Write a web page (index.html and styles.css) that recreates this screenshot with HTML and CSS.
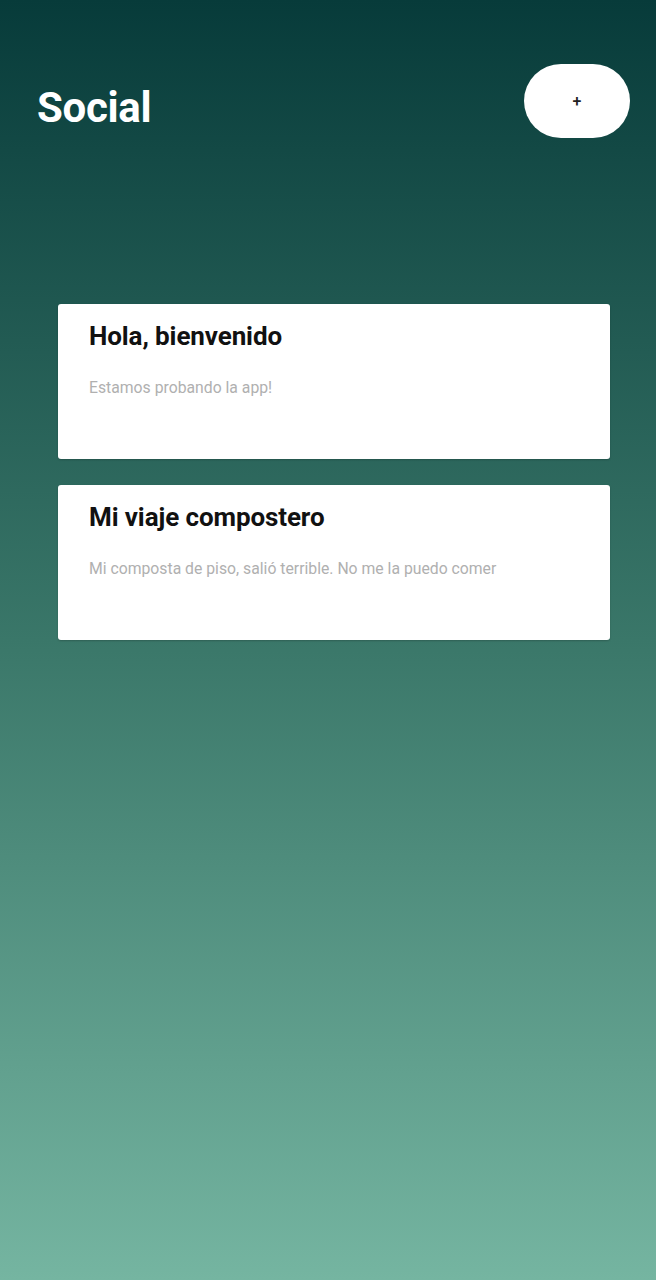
FILE: index.html
```html
<!DOCTYPE html>
<html lang="es">
<head>
<meta charset="utf-8">
<link rel="stylesheet" href="styles.css">
</head>
<body>
<div class="screen">
  <header class="header">
    <h1 class="title">Social</h1>
    <button class="add-btn">+</button>
  </header>
  <main class="list">
    <article class="card">
      <h2 class="card-title">Hola, bienvenido</h2>
      <p class="card-text">Estamos probando la app!</p>
    </article>
    <article class="card">
      <h2 class="card-title">Mi viaje compostero</h2>
      <p class="card-text">Mi composta de piso, salió terrible. No me la puedo comer</p>
    </article>
  </main>
</div>
</body>
</html>
```
FILE: styles.css
```css
* { box-sizing: border-box; }
html, body { margin: 0; padding: 0; }
body {
  font-family: Roboto, "Noto Sans", sans-serif;
}
.screen {
  width: 656px;
  height: 1280px;
  background: linear-gradient(to bottom, #073b3a 0%, #3a7769 50%, #75b5a1 100%);
  padding: 64px 26px 0 37px;
}
.header {
  display: flex;
  justify-content: space-between;
  align-items: flex-start;
  height: 74px;
}
.title {
  margin: 0;
  padding-top: 20px;
  color: #fff;
  font-size: 42px;
  line-height: 48px;
  font-weight: 700;
  letter-spacing: -0.3px;
}
.add-btn {
  width: 106px;
  height: 74px;
  border: none;
  border-radius: 37px;
  background: #fff;
  color: #222;
  font-family: Roboto, sans-serif;
  font-size: 16px;
  font-weight: 500;
  padding: 0;
}
.list {
  display: flex;
  flex-direction: column;
  gap: 26px;
  margin: 166px 20px 0 21px;
}
.card {
  background: #fff;
  border-radius: 3px;
  height: 155px;
  padding: 15px 31px;
  box-shadow: 0 1px 2px rgba(0,0,0,0.2);
}
.card-title {
  margin: 0;
  font-size: 26px;
  font-weight: 700;
  color: #111;
  line-height: 34px;
  letter-spacing: -0.1px;
}
.card-text {
  margin: 25px 0 0;
  font-size: 15.75px;
  color: #b0b0b0;
  line-height: 20px;
}
```
